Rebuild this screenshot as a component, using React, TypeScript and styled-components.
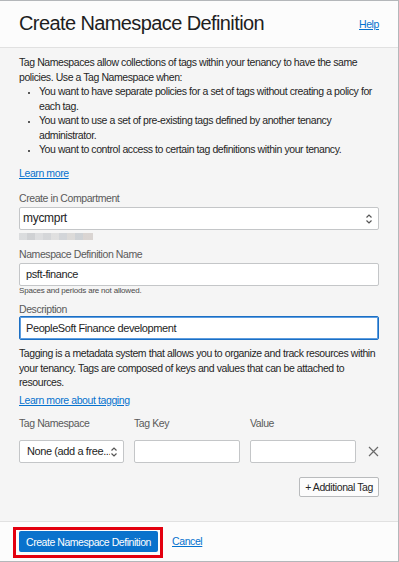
import React from 'react';
import styled, { createGlobalStyle } from 'styled-components';

const GlobalStyle = createGlobalStyle`
  html, body { margin: 0; padding: 0; background: #ffffff; }
  body { font-family: "Liberation Sans", Arial, sans-serif; color: #252525; }
  * { box-sizing: border-box; }
`;

const Panel = styled.div`
  width: 399px;
  height: 562px;
  display: flex;
  flex-direction: column;
  border-top: 1px solid #b4b7ba;
  border-right: 1px solid #b4b7ba;
  border-bottom: 1px solid #b4b7ba;
  background: #f5f5f5;
`;

const Header = styled.header`
  height: 47px;
  flex: none;
  display: flex;
  align-items: center;
  justify-content: space-between;
  padding: 0 19px 0 19px;
  background: #fcfcfc;
  border-bottom: 1px solid #e1e1e1;
`;

const Title = styled.h1`
  margin: 0 0 1px 0;
  font-size: 20px;
  font-weight: 400;
  color: #1e1e1e;
  letter-spacing: -0.6px;
`;

const Link = styled.a<{ size?: number }>`
  color: #0572ce;
  text-decoration: underline;
  font-size: ${(p) => p.size ?? 10.5}px;
  letter-spacing: -0.4px;
  cursor: pointer;
`;

const Body = styled.main`
  flex: 1;
  padding: 7px 19px 0 19px;
  font-size: 10.5px;
  letter-spacing: -0.42px;
  line-height: 14.5px;
`;

const Para = styled.p`
  margin: 0;
`;

const Bullets = styled.ul`
  margin: 0;
  padding-left: 20px;
  list-style: disc;
  li::marker { font-size: 8px; }
`;

const Block = styled.div<{ top: number }>`
  margin-top: ${(p) => p.top}px;
`;

const Label = styled.div<{ gap?: number }>`
  font-size: 10.5px;
  line-height: 14px;
  color: #5a5a5a;
  margin-bottom: ${(p) => p.gap ?? 2}px;
`;

const Field = styled.div<{ focused?: boolean; inset?: number }>`
  height: ${(p) => (p.focused ? 24 : 23)}px;
  width: 100%;
  background: #ffffff;
  border: 1px solid ${(p) => (p.focused ? '#1b6fc4' : '#c4c6c8')};
  box-shadow: ${(p) => (p.focused ? 'inset 0 0 0 1px #5d9de0' : 'none')};
  border-radius: 2px;
  display: flex;
  align-items: center;
  padding: 0 5px 0 ${(p) => p.inset ?? 6}px;
  color: #1e1e1e;
`;

const FieldText = styled.span<{ size?: number }>`
  flex: 1;
  font-size: ${(p) => p.size ?? 12}px;
  letter-spacing: ${(p) => (p.size && p.size < 12 ? -0.4 : -0.3)}px;
  white-space: nowrap;
  overflow: hidden;
`;

const Blurred = styled.div`
  margin-top: 3px;
  width: 74px;
  height: 7px;
  background: linear-gradient(
    90deg,
    #d6d8da 0 8px,
    #c9cbce 8px 16px,
    #d9dadc 16px 24px,
    #cfd1d4 24px 32px,
    #dcdcdc 32px 40px,
    #cdd0d4 40px 48px,
    #d8d6d4 48px 56px,
    #c8ccd0 56px 64px,
    #d5cfcc 64px 74px
  );
  opacity: 0.85;
`;

const Hint = styled.div`
  font-size: 8px;
  line-height: 10px;
  letter-spacing: -0.2px;
  color: #4a4a4a;
  margin-top: 0;
`;

const TagGrid = styled.div`
  display: grid;
  grid-template-columns: 105px 106px 106px 1fr;
  column-gap: 10px;
  align-items: center;
`;

const TagHead = styled.div`
  font-size: 10.5px;
  line-height: 14px;
  color: #5a5a5a;
  padding-bottom: 10px;
`;

const RemoveButton = styled.button`
  border: none;
  background: none;
  padding: 0 0 0 2px;
  width: 20px;
  height: 23px;
  display: flex;
  align-items: center;
  cursor: pointer;
`;

const Actions = styled.div`
  display: flex;
  justify-content: flex-end;
  margin-top: 14px;
`;

const GhostButton = styled.button`
  height: 20px;
  padding: 0 5px;
  font-family: inherit;
  font-size: 10.5px;
  letter-spacing: -0.4px;
  color: #252525;
  background: #fcfcfc;
  border: 1px solid #b9bbbd;
  border-radius: 2px;
`;

const Footer = styled.footer`
  height: 40px;
  flex: none;
  background: #fcfcfc;
  border-top: 1px solid #e1e1e1;
  display: flex;
  align-items: flex-start;
  padding: 5px 0 0 13px;
  gap: 9px;
`;

const Highlight = styled.div`
  border: 3px solid #e3000f;
  padding: 1px 2px 3px 3px;
`;

const PrimaryButton = styled.button`
  display: block;
  height: 21px;
  padding: 0 7px;
  font-family: inherit;
  font-size: 10.5px;
  letter-spacing: -0.45px;
  color: #ffffff;
  background: #0a72cc;
  border: none;
  border-radius: 2px;
  cursor: pointer;
`;

const FooterLink = styled(Link)`
  margin-top: 8px;
`;

const Chevrons = () => (
  <svg width="8" height="12" viewBox="0 0 8 12" fill="none" stroke="#555" strokeWidth="1.2">
    <path d="M1.5 4.5 L4 2 L6.5 4.5" />
    <path d="M1.5 7.5 L4 10 L6.5 7.5" />
  </svg>
);

const CloseIcon = () => (
  <svg width="11" height="11" viewBox="0 0 11 11" stroke="#6a6a6a" strokeWidth="1.2">
    <path d="M1 1 L10 10 M10 1 L1 10" />
  </svg>
);

export default function App() {
  return (
    <>
      <GlobalStyle />
      <Panel>
        <Header>
          <Title>Create Namespace Definition</Title>
          <Link>Help</Link>
        </Header>
        <Body>
          <Para>
            Tag Namespaces allow collections of tags within your tenancy to have the same policies. Use a Tag
            Namespace when:
          </Para>
          <Bullets>
            <li>You want to have separate policies for a set of tags without creating a policy for each tag.</li>
            <li>You want to use a set of pre-existing tags defined by another tenancy administrator.</li>
            <li>You want to control access to certain tag definitions within your tenancy.</li>
          </Bullets>
          <Block top={9}>
            <Link>Learn more</Link>
          </Block>
          <Block top={11}>
            <Label>Create in Compartment</Label>
            <Field inset={3}>
              <FieldText>mycmprt</FieldText>
              <Chevrons />
            </Field>
            <Blurred />
          </Block>
          <Block top={7}>
            <Label>Namespace Definition Name</Label>
            <Field>
              <FieldText size={11}>psft-finance</FieldText>
            </Field>
            <Hint>Spaces and periods are not allowed.</Hint>
          </Block>
          <Block top={6}>
            <Label gap={0}>Description</Label>
            <Field focused>
              <FieldText size={11}>PeopleSoft Finance development</FieldText>
            </Field>
          </Block>
          <Block top={6}>
            <Para>
              Tagging is a metadata system that allows you to organize and track resources within your tenancy. Tags
              are composed of keys and values that can be attached to resources.
            </Para>
          </Block>
          <Block top={3}>
            <Link>Learn more about tagging</Link>
          </Block>
          <Block top={9}>
            <TagGrid>
              <TagHead>Tag Namespace</TagHead>
              <TagHead>Tag Key</TagHead>
              <TagHead>Value</TagHead>
              <span />
              <Field inset={7}>
                <FieldText size={11}>None (add a free...</FieldText>
                <Chevrons />
              </Field>
              <Field />
              <Field />
              <RemoveButton aria-label="Remove tag">
                <CloseIcon />
              </RemoveButton>
            </TagGrid>
            <Actions>
              <GhostButton>+ Additional Tag</GhostButton>
            </Actions>
          </Block>
        </Body>
        <Footer>
          <Highlight>
            <PrimaryButton>Create Namespace Definition</PrimaryButton>
          </Highlight>
          <FooterLink>Cancel</FooterLink>
        </Footer>
      </Panel>
    </>
  );
}
